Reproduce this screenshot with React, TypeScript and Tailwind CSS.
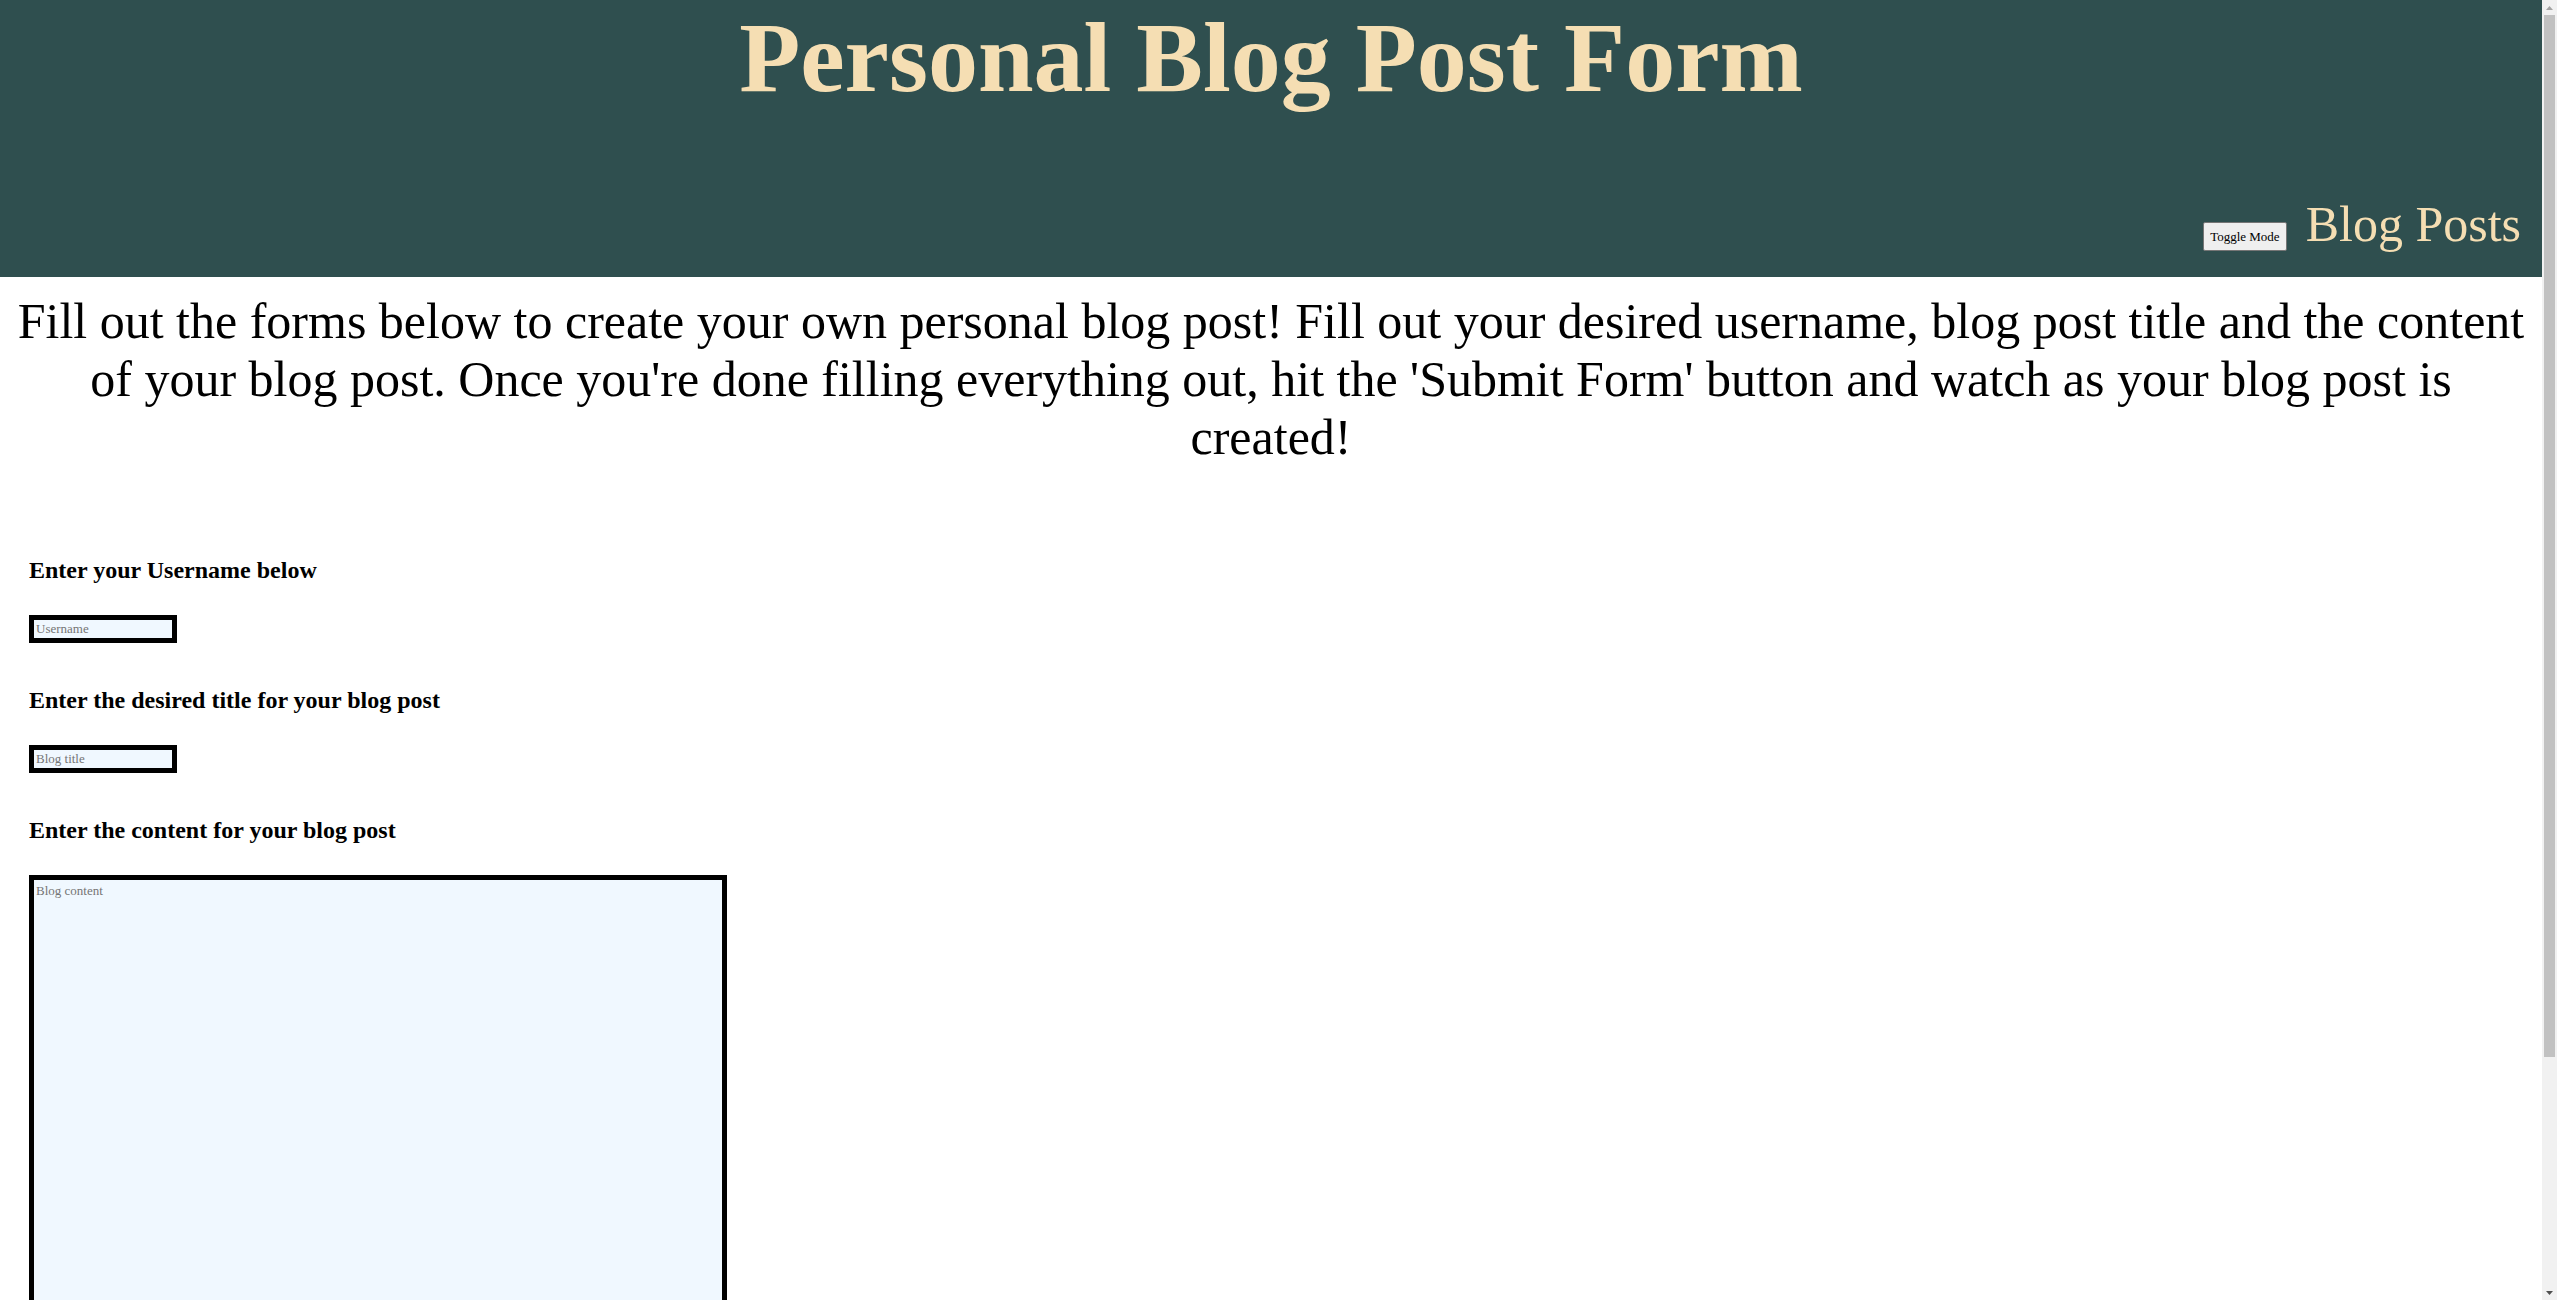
import React from 'react';

const serif = "font-['Liberation_Serif','Times_New_Roman',serif]";

const fieldClass =
  'w-[148px] h-[28px] px-[2px] border-[5px] border-black bg-[#f0f8ff] text-[13px] placeholder:text-[#757575] outline-none';

const Scrollbar: React.FC = () => (
  <div className="fixed top-0 right-0 w-[15px] h-screen bg-[#f1f1f1] flex flex-col items-center">
    <div className="h-[15px] flex items-center justify-center">
      <svg width="7" height="4" viewBox="0 0 7 4">
        <path d="M0 4 L3.5 0 L7 4 Z" fill="#a3a3a3" />
      </svg>
    </div>
    <div className="w-[11px] h-[1042px] bg-[#c1c1c1]" />
    <div className="mt-auto h-[15px] flex items-center justify-center">
      <svg width="7" height="4" viewBox="0 0 7 4">
        <path d="M0 0 L3.5 4 L7 0 Z" fill="#505050" />
      </svg>
    </div>
  </div>
);

const App: React.FC = () => {
  return (
    <div className={`min-h-screen bg-white text-black pr-[15px] ${serif}`}>
      <header className="h-[277px] bg-[#2f4f4f] flex flex-col">
        <h1 className="text-center text-[100px] font-bold leading-[normal] text-[#f5deb3]">
          Personal Blog Post Form
        </h1>
        <div className="mt-auto mb-[24px] pr-[21px] flex justify-end items-baseline gap-[19px]">
          <button className="h-[29px] px-[6px] text-[13px] text-black bg-[#efefef] border border-[#767676] rounded-[2px]">
            Toggle Mode
          </button>
          <span className="text-[50px] leading-[normal] text-[#f5deb3]">Blog Posts</span>
        </div>
      </header>

      <p className="mt-[15px] px-[8px] text-center text-[50px] leading-[normal]">
        Fill out the forms below to create your own personal blog post! Fill out your desired username, blog
        post title and the content of your blog post. Once you're done filling everything out, hit the 'Submit
        Form' button and watch as your blog post is created!
      </p>

      <form className="mt-[91px] px-[29px] flex flex-col items-start">
        <label className="text-[24px] font-bold leading-[normal]">Enter your Username below</label>
        <input placeholder="Username" className={`mt-[31px] ${fieldClass}`} />
        <label className="mt-[44px] text-[24px] font-bold leading-[normal]">
          Enter the desired title for your blog post
        </label>
        <input placeholder="Blog title" className={`mt-[31px] ${fieldClass}`} />
        <label className="mt-[44px] text-[24px] font-bold leading-[normal]">Enter the content for your blog post</label>
        <textarea
          placeholder="Blog content"
          className="mt-[31px] w-[698px] h-[560px] px-[2px] py-[1px] border-[5px] border-black bg-[#f0f8ff] text-[13px] placeholder:text-[#757575] outline-none resize-none"
        />
      </form>
      <div className="h-[40px]" />
      <Scrollbar />
    </div>
  );
};

export default App;
